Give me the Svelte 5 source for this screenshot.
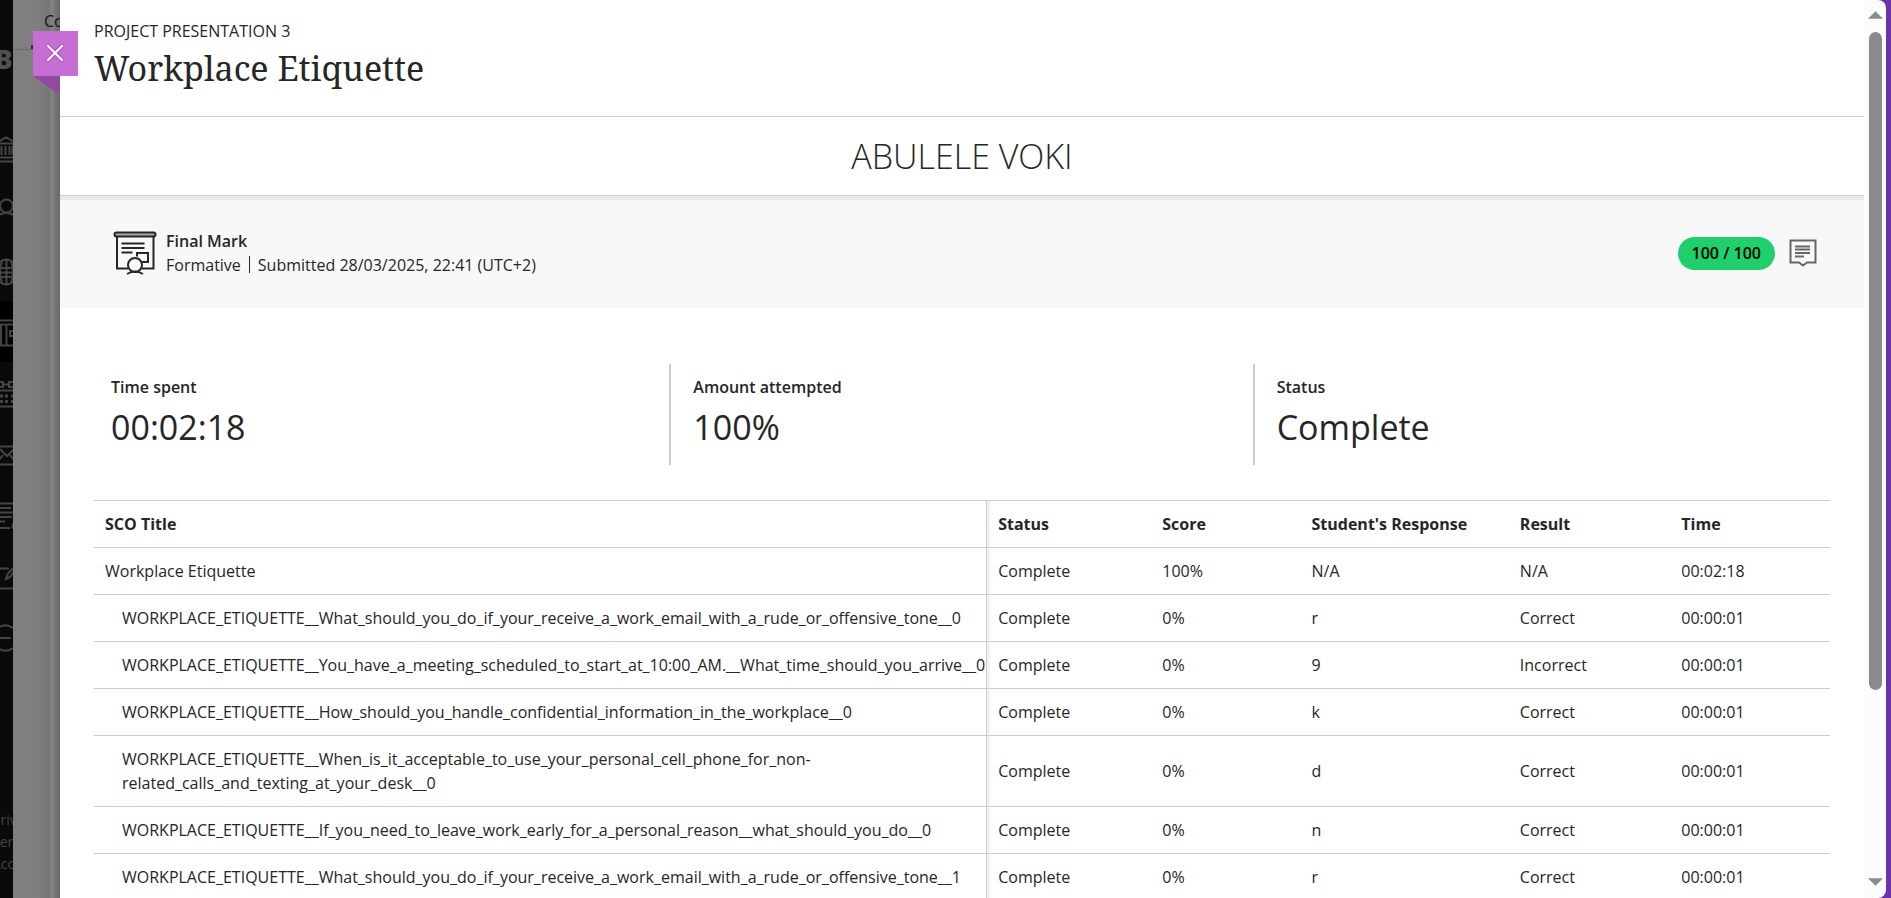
<script>
  const stats = [
    { label: 'Time spent', value: '00:02:18' },
    { label: 'Amount attempted', value: '100%' },
    { label: 'Status', value: 'Complete' }
  ];
  const headings = ['SCO Title', 'Status', 'Score', "Student's Response", 'Result', 'Time'];
  const rows = [
    ['Workplace Etiquette', 'Complete', '100%', 'N/A', 'N/A', '00:02:18'],
    ['WORKPLACE_ETIQUETTE__What_should_you_do_if_your_receive_a_work_email_with_a_rude_or_offensive_tone__0', 'Complete', '0%', 'r', 'Correct', '00:00:01'],
    ['WORKPLACE_ETIQUETTE__You_have_a_meeting_scheduled_to_start_at_10:00_AM.__What_time_should_you_arrive__0', 'Complete', '0%', '9', 'Incorrect', '00:00:01'],
    ['WORKPLACE_ETIQUETTE__How_should_you_handle_confidential_information_in_the_workplace__0', 'Complete', '0%', 'k', 'Correct', '00:00:01'],
    ['WORKPLACE_ETIQUETTE__When_is_it_acceptable_to_use_your_personal_cell_phone_for_non-related_calls_and_texting_at_your_desk__0', 'Complete', '0%', 'd', 'Correct', '00:00:01'],
    ['WORKPLACE_ETIQUETTE__If_you_need_to_leave_work_early_for_a_personal_reason__what_should_you_do__0', 'Complete', '0%', 'n', 'Correct', '00:00:01'],
    ['WORKPLACE_ETIQUETTE__What_should_you_do_if_your_receive_a_work_email_with_a_rude_or_offensive_tone__1', 'Complete', '0%', 'r', 'Correct', '00:00:01']
  ];
</script>

<div class="app">
  <nav class="rail" aria-label="Main">
    <div class="brand">B</div>
    <div class="item"><svg viewBox="0 0 13 28"><path d="M-1 5.500 6 1.500l8 4M-1 7.500h15M1.500 10v9M5.500 10v9M9.500 10v9M12.500 10v9M-1 21.500h15M-1 25.500h15" /></svg></div>
    <div class="item"><svg viewBox="0 0 13 28"><circle cx="6.500" cy="9" r="6.500" /><path d="M-1 18q7-4 15 0" /></svg></div>
    <div class="item"><svg viewBox="0 0 13 28"><path d="M0 4q6-5 13 0M0 24q6 5 13 0M6.500 1v26M2 3q-4 11 0 22M11 3q4 11 0 22M-1 10h15M-1 14.500h15M-1 19h15" /></svg></div>
    <div class="item active"><svg viewBox="0 0 13 28"><path d="M-1 1.500h15M-1 5.500h15M1 6v20M6.500 6v20M-1 26.500h15M14 12h-4v5h4" /></svg></div>
    <div class="item"><svg viewBox="0 0 13 28"><path d="M-1 2h4v5h-4M3 4.500h6M14 2H9v5h5M-1 10.500h15M-1 26.500h15" /><path class="dots" d="M0 16h3M5 16h3M11 16h3M0 21.500h3M5 21.500h3M11 21.500h3" /></svg></div>
    <div class="item"><svg viewBox="0 0 13 28"><path d="M-1 5.500h15M-1 23.500h15M0 8l7 7 7-7M-1 19l4-5M14 19l-4-5" /></svg></div>
    <div class="item"><svg viewBox="0 0 13 28"><path d="M-1 1.500h15M-1 6h12M-1 10.500h15M-1 15h13M-1 19.500h6M-1 26h11M14 21q-3 3 0 6" /></svg></div>
    <div class="item"><svg viewBox="0 0 13 28"><path d="M-1 5.500h10M-1 25.500h15M14 5Q8 8 6 16l4-2 5-7" /></svg></div>
    <div class="item"><svg viewBox="0 0 13 28"><path d="M0 3q6-4 13 1M0 25q6 4 13-1M-1 14h12" /></svg></div>
    <div class="legal"><span>Privacy</span><span>Terms</span><span>Accessibility</span></div>
  </nav>

  <div class="backdrop"><div class="tab">Content</div><div class="shade"></div><div class="edge"></div></div>

  <div class="frame">
    <main class="panel">
      <button class="close" aria-label="Close">
        <svg viewBox="0 0 20 20"><path d="M3 3l14 14M17 3 3 17" /></svg>
      </button>
      <div class="fold"></div>

      <header>
        <div class="kicker">PROJECT PRESENTATION 3</div>
        <h1>Workplace Etiquette</h1>
      </header>

      <h2>ABULELE VOKI</h2>

      <section class="mark">
        <svg class="board" viewBox="0 0 44 44">
          <rect class="bar" x="1.500" y="1.500" width="41" height="4" rx="2" />
          <path d="M4 6v31.500h11M40.500 6v31.500H29M8.500 12.500h23M8.500 17h23M8.500 21.500h11M24 25.500v-3.500h11v9h-6" />
          <circle cx="22" cy="34" r="7" /><path d="M14 43q8-5 16 0" />
        </svg>
        <div class="about">
          <strong>Final Mark</strong>
          <div class="meta"><span>Formative</span><i></i><span>Submitted 28/03/2025, 22:41 (UTC+2)</span></div>
        </div>
        <span class="pill">100 / 100</span>
        <button class="feedback" aria-label="Feedback">
          <svg viewBox="0 0 28 28"><path d="M1.500 1.500h25v22h-8.500L14 26.500l-4-3H1.500z" /><path d="M6 7.500h15M6 10.500h15M6 14h15M6 17.500h9" /></svg>
        </button>
      </section>

      <section class="stats">
        {#each stats as s}
          <div class="stat"><span class="label">{s.label}</span><span class="value">{s.value}</span></div>
        {/each}
      </section>

      <div class="results">
        <table>
          <colgroup><col class="c1" /><col class="c2" /><col class="c3" /><col class="c4" /><col class="c5" /><col class="c6" /></colgroup>
          <thead><tr>{#each headings as h}<th scope="col">{h}</th>{/each}</tr></thead>
          <tbody>
            {#each rows as row, r}
              <tr class:child={r > 0}>{#each row as cell}<td>{cell}</td>{/each}</tr>
            {/each}
          </tbody>
        </table>
      </div>
    </main>

    <div class="scroll" aria-hidden="true">
      <svg viewBox="0 0 16 8"><path d="M8 0l8 8H0z" /></svg>
      <div class="track"><div class="thumb"></div></div>
      <svg viewBox="0 0 16 8"><path d="M0 0h16L8 8z" /></svg>
    </div>
  </div>
</div>

<style>
  :global(body) { margin: 0; background: #6d31ab; }
  * { box-sizing: border-box; }
  .app {
    display: flex; height: 100vh; overflow: hidden; padding-right: 5px;
    background: #6d31ab; color: #262626;
    font: 385 16px/24px "Open Sans", "Noto Sans", sans-serif;
  }
  svg { display: block; fill: none; stroke: currentColor; }

  .rail { position: relative; flex: none; width: 13px; overflow: hidden; background: #0a0a0a; color: #454545; }
  .brand { height: 118px; padding-top: 43px; margin-left: -5px; color: #505050; font-size: 26px; line-height: 32px; font-weight: 800; }
  .item { height: 61px; padding-top: 18px; }
  .item svg { width: 13px; height: 28px; stroke-width: 2; }
  .item.active { background: #000; }
  .dots { stroke-width: 3; }
  .legal { position: absolute; left: -8px; bottom: 23px; display: flex; flex-direction: column; font-size: 14px; line-height: 22px; }

  .backdrop { position: relative; display: flex; justify-content: flex-end; flex: none; width: 47px; overflow: hidden; background: #7f7f7f; }
  .tab { position: absolute; top: 0; left: 0; width: 47px; height: 50px; padding: 9px 0 0 31px; border-bottom: 1px solid #6c6c6c; color: #131313; font-weight: 400; }
  .tab::after { content: ""; position: absolute; left: 18px; right: 0; bottom: 0; height: 4px; background: #4b1a59; }
  .shade { width: 12px; background: linear-gradient(90deg, #7f7f7f, #757575); }
  .edge { width: 10px; background: linear-gradient(90deg, #808080 0 35%, #747474 50%, #6a6a6a); }

  .frame { display: flex; flex: 1; min-width: 0; border-radius: 0 8px 8px 0; background: #fcfcfc; }
  .panel { position: relative; flex: 1; min-width: 0; background: #fff; }

  .close { position: absolute; z-index: 2; top: 31px; left: -27px; width: 45px; height: 45px; padding: 12px 12px 13px; border: 0; background: #c56fd5; color: #fff; }
  .close svg { width: 20px; height: 20px; stroke-width: 2; stroke-linecap: round; filter: drop-shadow(0 0 1px #8b2a9d); }
  .fold { position: absolute; top: 76px; left: -27px; width: 27px; height: 19px; background: #904a9e; clip-path: polygon(0 0, 100% 0, 100% 100%); }

  header { height: 117px; padding: 19px 34px 0; border-bottom: 1px solid #ccc; }
  h1 { margin: 3px 0 0; font: 400 34px/44px "Noto Serif", "Droid Serif", "DejaVu Serif", serif; }
  h2 { height: 79px; margin: 0; border-bottom: 1px solid #ccc; font-size: 34px; line-height: 78px; font-weight: 300; text-align: center; }

  .mark { display: flex; align-items: center; height: 112px; padding: 0 47px 2px 53px; border-top: 4px solid #e8e8e8; background: #f8f8f8; }
  .board { width: 44px; height: 44px; stroke-width: 2; }
  .bar { fill: #aaa; }
  .about { flex: 1; margin-left: 9px; }
  .about strong { font-weight: 600; }
  .meta { display: flex; align-items: center; }
  .meta i { width: 1px; height: 17px; margin: 0 8px 2px; background: #262626; }
  .pill { padding: 0 14px; border-radius: 17px; background: #1fcf6c; color: #000; line-height: 33px; font-weight: 600; }
  .feedback { margin-left: 14px; padding: 0; border: 0; background: none; color: #666; }
  .feedback svg { width: 28px; height: 28px; stroke-width: 2; }

  .stats { display: grid; grid-template-columns: repeat(3, 1fr); padding: 56px 28px 35px 26px; }
  .stat { display: flex; flex-direction: column; height: 101px; padding-top: 11px; padding-left: 25px; }
  .stat + .stat { padding-left: 22px; border-left: 2px solid #ccc; }
  .label { font-weight: 600; }
  .value { margin-top: 5px; font-size: 34px; line-height: 46px; font-weight: 400; }

  .results { padding: 0 34px; }
  table { width: 100%; table-layout: fixed; border-collapse: separate; border-spacing: 0; border-top: 1px solid #ccc; }
  .c1 { width: 51.45%; } .c2 { width: 9.45%; } .c3 { width: 8.6%; } .c4 { width: 12%; } .c5 { width: 9.3%; } .c6 { width: 9.2%; }
  th, td { padding: 11px; border-bottom: 1px solid #ccc; text-align: left; overflow-wrap: break-word; }
  th { font-weight: 700; }
  th:first-child, td:first-child { padding-right: 0; border-right: 1px solid #ccc; }
  th:nth-child(2), td:nth-child(2) { box-shadow: inset 3px 0 #f2f2f2; }
  .child td:first-child { padding-left: 28px; }

  .scroll { display: flex; flex-direction: column; align-items: center; flex: none; width: 22px; padding: 11px 0 12px; }
  .scroll svg { width: 15px; height: 8px; fill: #8b8b8b; stroke: none; }
  .track { flex: 1; padding: 13px 0; }
  .thumb { width: 13px; height: 79%; border-radius: 7px; background: #8b8b8b; }
</style>
